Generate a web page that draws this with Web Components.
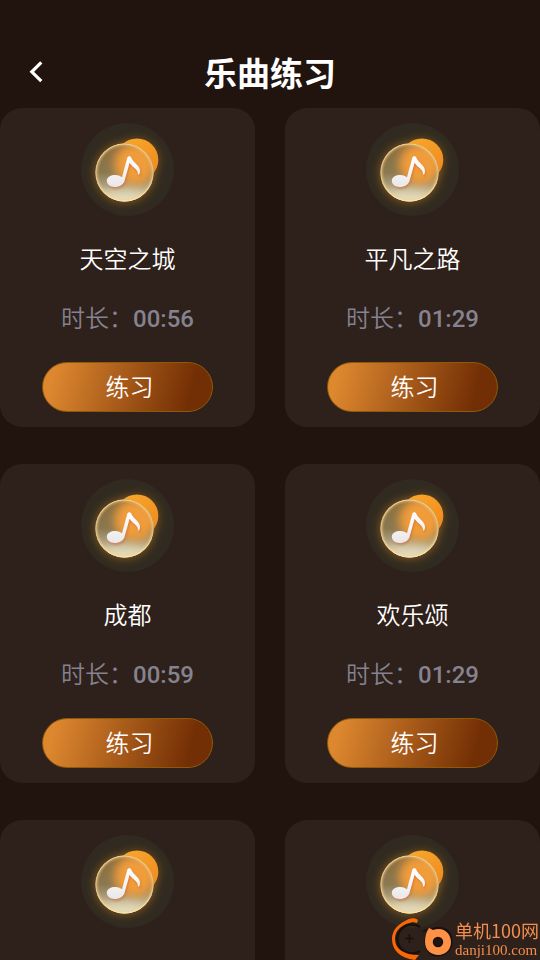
<!DOCTYPE html>
<html lang="zh-CN">
<head>
<meta charset="UTF-8">
<meta name="viewport" content="width=device-width, initial-scale=1">
<title>乐曲练习</title>
<style>
    body {
        margin: 0;
        background: #21140f;
        color: #fff;
        font-family: Roboto, "Noto Sans CJK SC", sans-serif;
    }
</style>
</head>
<body>
<practice-page>
    <page-header slot="header">乐曲练习</page-header>
    <song-card time="00:56">天空之城</song-card>
    <song-card time="01:29">平凡之路</song-card>
    <song-card time="00:59">成都</song-card>
    <song-card time="01:29">欢乐颂</song-card>
    <song-card></song-card>
    <song-card></song-card>
    <site-mark slot="mark"></site-mark>
</practice-page>

<script>
class PracticePage extends HTMLElement {
    connectedCallback() {
        this.attachShadow({ mode: 'open' });
        this.shadowRoot.innerHTML = `
            <style>
                :host {
                    display: flex;
                    flex-direction: column;
                    height: 100vh;
                    overflow: hidden;
                }

                main {
                    flex: 1;
                    min-height: 0;
                    overflow: hidden;
                    display: grid;
                    grid-template-columns: 1fr 1fr;
                    align-content: start;
                    gap: 37px 30px;
                }
            </style>

            <slot name="header"></slot>
            <main><slot></slot></main>
            <slot name="mark"></slot>
        `;
    }
}

class PageHeader extends HTMLElement {
    connectedCallback() {
        this.attachShadow({ mode: 'open' });
        this.shadowRoot.innerHTML = `
            <style>
                :host {
                    display: block;
                    padding-top: 36px;
                }

                header {
                    display: grid;
                    grid-template-columns: 72px 1fr 72px;
                    align-items: center;
                    height: 72px;
                }

                .back {
                    display: flex;
                    justify-content: center;
                    align-items: center;
                    height: 72px;
                    padding: 0;
                    border: none;
                    background: none;
                    color: inherit;
                    cursor: pointer;
                }

                h1 {
                    margin: 0;
                    padding-top: 6px;
                    font-size: 33px;
                    line-height: 48px;
                    font-weight: 700;
                    text-align: center;
                }
            </style>

            <header>
                <button class="back" aria-label="返回">
                    <svg width="24" height="24" viewBox="0 0 24 24" fill="none" stroke="currentColor" stroke-width="3.2">
                        <path d="M17.3 2.4L7.8 11.8L17.3 21.2"/>
                    </svg>
                </button>
                <h1><slot></slot></h1>
            </header>
        `;
    }
}

class MusicIcon extends HTMLElement {
    connectedCallback() {
        this.attachShadow({ mode: 'open' });
        this.shadowRoot.innerHTML = `
            <style>
                :host {
                    display: block;
                    width: 93px;
                    height: 93px;
                }

                svg {
                    display: block;
                }
            </style>

            <svg width="93" height="93" viewBox="0 0 93 93" aria-hidden="true">
                <defs>
                    <linearGradient id="sun" x1="0" y1="0" x2="1" y2="1">
                        <stop offset="0" stop-color="#f9ac2c"/>
                        <stop offset="1" stop-color="#ee861f"/>
                    </linearGradient>
                    <linearGradient id="glass" x1="0" y1="0" x2="0" y2="1">
                        <stop offset="0" stop-color="#8a6c3c"/>
                        <stop offset=".5" stop-color="#8a7850"/>
                        <stop offset=".75" stop-color="#b0a484"/>
                        <stop offset="1" stop-color="#ddd2b0"/>
                    </linearGradient>
                    <linearGradient id="rim" x1="0" y1="0" x2="0" y2="1">
                        <stop offset="0" stop-color="#f2d08e"/>
                        <stop offset=".5" stop-color="#dcb878"/>
                        <stop offset="1" stop-color="#fbe6a8"/>
                    </linearGradient>
                    <linearGradient id="note" x1="0" y1="0" x2="0" y2="1">
                        <stop offset="0" stop-color="#fff"/>
                        <stop offset="1" stop-color="#ebe7e8"/>
                    </linearGradient>
                    <filter id="glow" x="-50%" y="-50%" width="200%" height="200%">
                        <feGaussianBlur stdDeviation="5"/>
                    </filter>
                    <filter id="frost" x="-50%" y="-50%" width="200%" height="200%">
                        <feGaussianBlur stdDeviation="5"/>
                    </filter>
                    <filter id="shade" x="-50%" y="-50%" width="200%" height="200%">
                        <feGaussianBlur stdDeviation="1"/>
                    </filter>
                    <clipPath id="lens"><circle cx="43.5" cy="49.5" r="29"/></clipPath>
                    <clipPath id="disc"><circle cx="46.5" cy="46.5" r="46.5"/></clipPath>
                </defs>
                <circle cx="46.5" cy="46.5" r="46.5" fill="#302a20"/>
                <g clip-path="url(#disc)" filter="url(#glow)">
                    <circle cx="43.5" cy="50" r="30" fill="#e08a22" opacity=".45"/>
                    <circle cx="56.5" cy="37" r="22" fill="#e08a22" opacity=".3"/>
                </g>
                <circle cx="56" cy="36.7" r="21.3" fill="url(#sun)"/>
                <circle cx="43.5" cy="49.5" r="29" fill="url(#glass)"/>
                <g clip-path="url(#lens)">
                    <circle cx="54" cy="41" r="21" fill="#f09c3a" filter="url(#frost)"/>
                    <ellipse cx="42" cy="76" rx="26" ry="10" fill="#efe6c6" opacity=".6" filter="url(#frost)"/>
                    <circle cx="43.5" cy="49.5" r="28.5" fill="none" stroke="#f0cf8e" stroke-width="3" opacity=".6" filter="url(#shade)"/>
                </g>
                <circle cx="43.5" cy="49.5" r="28.5" fill="none" stroke="url(#rim)" stroke-width="1.2"/>
                <g id="shape">
                    <path d="M46.2 35C46.8 33 49.2 32.7 50.2 34.6C52.2 39.6 58.8 42.4 59 47.9C59 50.6 58 52 57 51.4C57.4 46.4 51.6 44.6 48.6 39.8L43.8 57C42.8 61.8 38.6 64 33.6 64C29.2 64 25.8 61.4 25.8 57.8C25.8 53.8 30.2 51.8 34.6 51.9C37.4 52 39.6 53 41 54.3Z" fill="#cc602e" opacity=".5" transform="translate(1 2)" filter="url(#shade)"/>
                    <path d="M46.2 35C46.8 33 49.2 32.7 50.2 34.6C52.2 39.6 58.8 42.4 59 47.9C59 50.6 58 52 57 51.4C57.4 46.4 51.6 44.6 48.6 39.8L43.8 57C42.8 61.8 38.6 64 33.6 64C29.2 64 25.8 61.4 25.8 57.8C25.8 53.8 30.2 51.8 34.6 51.9C37.4 52 39.6 53 41 54.3Z" fill="url(#note)"/>
                </g>
            </svg>
        `;
    }
}

class SongCard extends HTMLElement {
    connectedCallback() {
        const time = this.getAttribute('time');
        this.attachShadow({ mode: 'open' });
        this.shadowRoot.innerHTML = `
            <style>
                :host {
                    display: flex;
                    flex-direction: column;
                    align-items: center;
                    box-sizing: border-box;
                    min-height: 319px;
                    padding: 15px;
                    border-radius: 22px;
                    background: #2e201a;
                }

                h2,
                p {
                    margin: 0;
                    font-size: 24px;
                    line-height: 36px;
                    font-weight: 350;
                }

                h2 {
                    margin-top: 26px;
                }

                p {
                    margin-top: 23px;
                    color: #858390;
                }

                time {
                    font-weight: 500;
                }

                button {
                    width: 76%;
                    height: 50px;
                    margin-top: 25px;
                    padding: 2px 0 0 4px;
                    border: 1px solid #8f5a08;
                    border-radius: 25px;
                    background: linear-gradient(105deg, #dd872f 8%, #722e04 86%) border-box;
                    color: #fff;
                    font: inherit;
                    font-size: 24px;
                    font-weight: 350;
                    line-height: 36px;
                    cursor: pointer;
                }
            </style>

            <music-icon></music-icon>
            ${time ? `
                <h2><slot></slot></h2>
                <p>时长：<time>${time}</time></p>
                <button>练习</button>
            ` : ''}
        `;
    }
}

class SiteMark extends HTMLElement {
    connectedCallback() {
        this.attachShadow({ mode: 'open' });
        this.shadowRoot.innerHTML = `
            <style>
                :host {
                    position: fixed;
                    right: 1px;
                    bottom: 0;
                    display: flex;
                    align-items: center;
                    gap: 2px;
                    color: #f28e50;
                }

                svg {
                    display: block;
                }

                .name,
                .site {
                    display: block;
                    white-space: nowrap;
                }

                .name {
                    font-family: "Noto Sans CJK SC", sans-serif;
                    font-size: 18px;
                    line-height: 22px;
                }

                .site {
                    font-family: "Liberation Serif", serif;
                    font-size: 15px;
                    line-height: 18px;
                    color: inherit;
                    text-decoration: none;
                }
            </style>

            <svg width="62" height="42" viewBox="0 0 62 42" fill="none" aria-hidden="true">
                <path d="M29 9A14.5 14.5 0 1 0 29 33" stroke="#17100d" stroke-width="2.5"/>
                <path d="M18.5 16V25M14 20.5H23" stroke="#17100d" stroke-width="1.6"/>
                <path d="M32 14C36 10 42 12 43 18" stroke="#1f1511" stroke-width="2"/>
                <path d="M27 2C24 -1 18 0 14 3C6 7 1 13 1 21C1 32 9 40 24 42L28 37C13 37 4 31 4 21C4 12 11 6 22 4L26 5Z" fill="#fa6805"/>
                <path d="M39 11L45 9C59 8 63 17 61 28C58 39 43 42 37 34C31 27 33 16 39 11Z" fill="#17100d"/>
                <path d="M38 10L42 12C53 8 60 16 60 24C60 32 54 37 47.5 37C40 37 34 32 34 24C34 19 35 14 38 10Z" fill="#ff9147"/>
                <circle cx="47" cy="24" r="4.5" fill="#21140f" stroke="#17100d" stroke-width="1.5"/>
            </svg>
            <div>
                <span class="name">单机100网</span>
                <a class="site" href="#">danji100.com</a>
            </div>
        `;
    }
}

customElements.define('practice-page', PracticePage);
customElements.define('page-header', PageHeader);
customElements.define('music-icon', MusicIcon);
customElements.define('song-card', SongCard);
customElements.define('site-mark', SiteMark);
</script>
</body>
</html>
